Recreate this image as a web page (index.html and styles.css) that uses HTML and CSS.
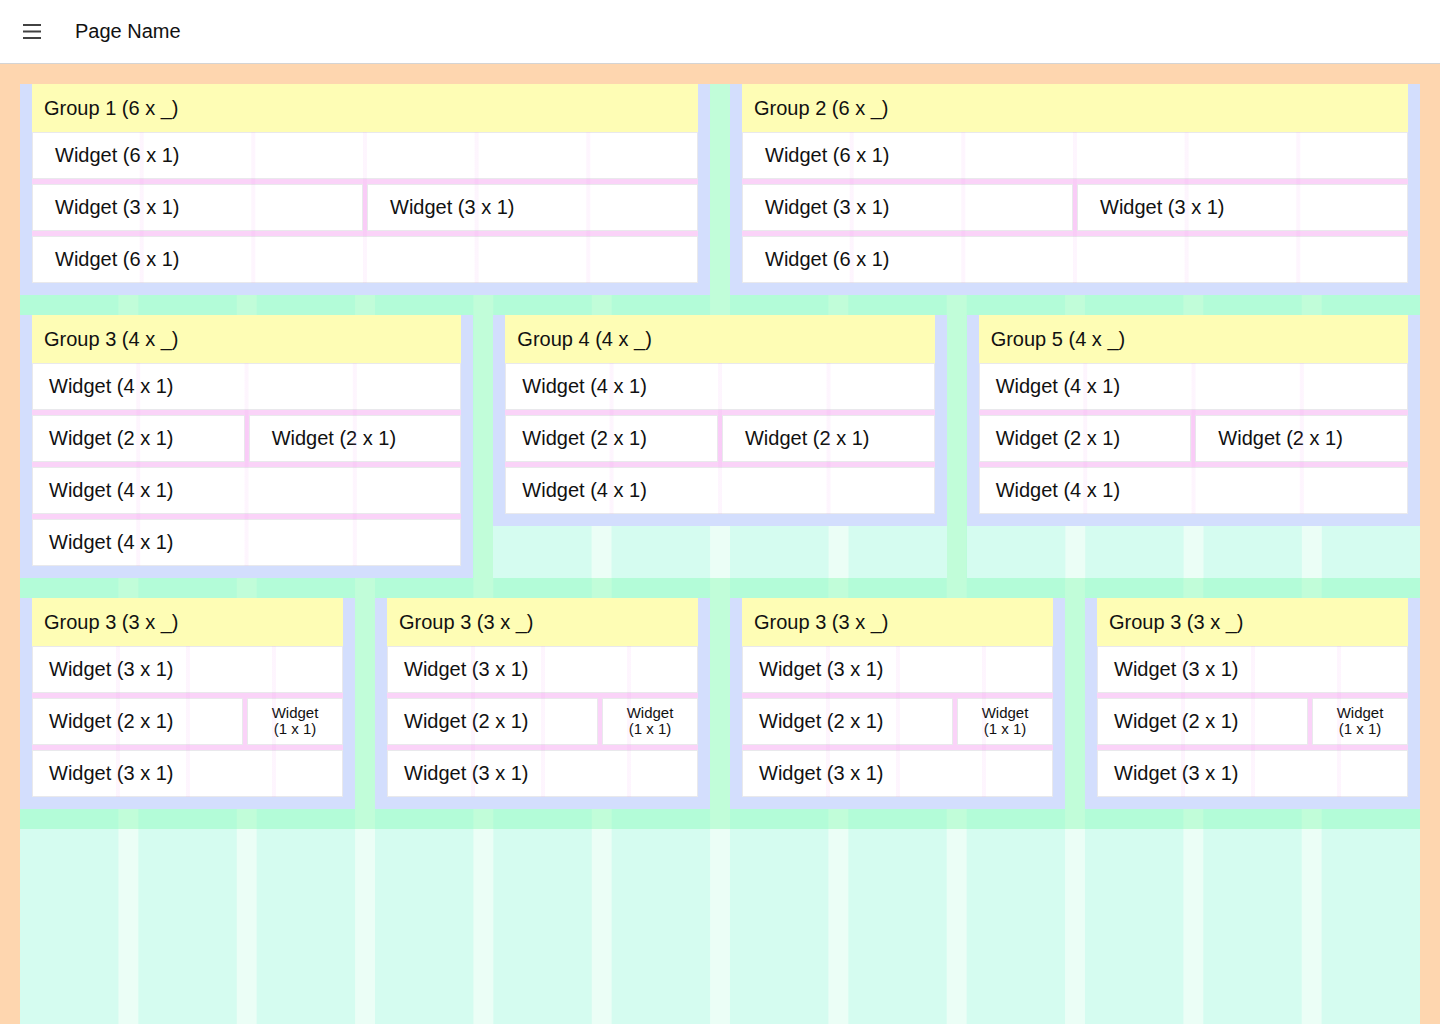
FILE: index.html
```html
<!DOCTYPE html>
<html lang="en">
<head>
<meta charset="utf-8">
<title>Page Name</title>
<link rel="stylesheet" href="styles.css">
</head>
<body>
<header class="topbar">
  <button class="menu-btn" aria-label="Menu">
    <svg width="18" height="16" viewBox="0 0 18 16" aria-hidden="true"><path d="M0 1h18M0 7.5h18M0 14h18" stroke="#424242" stroke-width="1.8" fill="none"/></svg>
  </button>
  <h1 class="page-title">Page Name</h1>
</header>
<main class="page">
  <div class="canvas">
    <div class="row">
      <div class="cell span-6">
        <section class="group">
          <div class="group-head">Group 1 (6 x _)</div>
          <div class="group-body cols-6">
            <div class="widget w6">Widget (6 x 1)</div>
            <div class="widget w3">Widget (3 x 1)</div>
            <div class="widget w3">Widget (3 x 1)</div>
            <div class="widget w6">Widget (6 x 1)</div>
          </div>
        </section>
      </div>
      <div class="cell span-6">
        <section class="group">
          <div class="group-head">Group 2 (6 x _)</div>
          <div class="group-body cols-6">
            <div class="widget w6">Widget (6 x 1)</div>
            <div class="widget w3">Widget (3 x 1)</div>
            <div class="widget w3">Widget (3 x 1)</div>
            <div class="widget w6">Widget (6 x 1)</div>
          </div>
        </section>
      </div>
    </div>
    <div class="row">
      <div class="cell span-4">
        <section class="group">
          <div class="group-head">Group 3 (4 x _)</div>
          <div class="group-body cols-4">
            <div class="widget w4 tight">Widget (4 x 1)</div>
            <div class="widget w2 tight">Widget (2 x 1)</div>
            <div class="widget w2">Widget (2 x 1)</div>
            <div class="widget w4 tight">Widget (4 x 1)</div>
            <div class="widget w4 tight">Widget (4 x 1)</div>
          </div>
        </section>
      </div>
      <div class="cell span-4">
        <section class="group">
          <div class="group-head">Group 4 (4 x _)</div>
          <div class="group-body cols-4">
            <div class="widget w4 tight">Widget (4 x 1)</div>
            <div class="widget w2 tight">Widget (2 x 1)</div>
            <div class="widget w2">Widget (2 x 1)</div>
            <div class="widget w4 tight">Widget (4 x 1)</div>
          </div>
        </section>
      </div>
      <div class="cell span-4">
        <section class="group">
          <div class="group-head">Group 5 (4 x _)</div>
          <div class="group-body cols-4">
            <div class="widget w4 tight">Widget (4 x 1)</div>
            <div class="widget w2 tight">Widget (2 x 1)</div>
            <div class="widget w2">Widget (2 x 1)</div>
            <div class="widget w4 tight">Widget (4 x 1)</div>
          </div>
        </section>
      </div>
    </div>
    <div class="row">
      <div class="cell span-3">
        <section class="group">
          <div class="group-head">Group 3 (3 x _)</div>
          <div class="group-body cols-3">
            <div class="widget wfull tight">Widget (3 x 1)</div>
            <div class="widget tight">Widget (2 x 1)</div>
            <div class="widget small">Widget<br>(1 x 1)</div>
            <div class="widget wfull tight">Widget (3 x 1)</div>
          </div>
        </section>
      </div>
      <div class="cell span-3">
        <section class="group">
          <div class="group-head">Group 3 (3 x _)</div>
          <div class="group-body cols-3">
            <div class="widget wfull tight">Widget (3 x 1)</div>
            <div class="widget tight">Widget (2 x 1)</div>
            <div class="widget small">Widget<br>(1 x 1)</div>
            <div class="widget wfull tight">Widget (3 x 1)</div>
          </div>
        </section>
      </div>
      <div class="cell span-3">
        <section class="group">
          <div class="group-head">Group 3 (3 x _)</div>
          <div class="group-body cols-3">
            <div class="widget wfull tight">Widget (3 x 1)</div>
            <div class="widget tight">Widget (2 x 1)</div>
            <div class="widget small">Widget<br>(1 x 1)</div>
            <div class="widget wfull tight">Widget (3 x 1)</div>
          </div>
        </section>
      </div>
      <div class="cell span-3">
        <section class="group">
          <div class="group-head">Group 3 (3 x _)</div>
          <div class="group-body cols-3">
            <div class="widget wfull tight">Widget (3 x 1)</div>
            <div class="widget tight">Widget (2 x 1)</div>
            <div class="widget small">Widget<br>(1 x 1)</div>
            <div class="widget wfull tight">Widget (3 x 1)</div>
          </div>
        </section>
      </div>
    </div>
    <div class="filler"></div>
  </div>
</main>
</body>
</html>
```
FILE: styles.css
```css
* { box-sizing: border-box; }

html, body {
  margin: 0;
  padding: 0;
}

body {
  font-family: "Liberation Sans", Arial, Helvetica, sans-serif;
  color: #111;
  background: #fff;
}

/* ---------- top bar ---------- */
.topbar {
  height: 64px;
  display: flex;
  align-items: center;
  padding-left: 23px;
  background: #fff;
  border-bottom: 1px solid #d4d4d4;
}

.menu-btn {
  width: 18px;
  height: 16px;
  padding: 0;
  margin: 0 34px 0 0;
  border: 0;
  background: none;
  display: flex;
  cursor: pointer;
}

.page-title {
  margin: 0;
  font-size: 20px;
  font-weight: 400;
  color: #111;
}

/* ---------- page canvas ---------- */
.page {
  background: #fed6af;
  padding: 20px 20px 0;
}

.canvas {
  min-height: calc(100vh - 84px);
  display: flex;
  flex-direction: column;
  gap: 20px;
  background-color: #b3fcd8;
  background-image: linear-gradient(to right, transparent calc(100% - 20px), #c1fdd9 calc(100% - 20px));
  background-size: calc((100% + 20px) / 12) 100%;
}

.row {
  display: grid;
  grid-template-columns: repeat(12, minmax(0, 1fr));
  column-gap: 20px;
}

.cell,
.filler {
  background-color: #d5fcf0;
  background-image: linear-gradient(to right, transparent calc(100% - 20px), #ebfef6 calc(100% - 20px));
  background-size: calc((100% + 20px) / var(--n)) 100%;
  display: flex;
  flex-direction: column;
}

.filler { --n: 12; flex: 1; }

.span-6 { grid-column: span 6; --n: 6; }
.span-4 { grid-column: span 4; --n: 4; }
.span-3 { grid-column: span 3; --n: 3; }

/* ---------- groups ---------- */
.group {
  background: #d3defd;
  padding: 0 12px 12px;
}

.group-head {
  height: 48px;
  display: flex;
  align-items: center;
  padding-left: 12px;
  background: #fefdb5;
  font-size: 20px;
}

.group-body {
  position: relative;
  display: grid;
  grid-auto-rows: 47px;
  row-gap: 5px;
  column-gap: 4px;
  background: #fad3f8;
}

.group-body::after {
  content: "";
  position: absolute;
  inset: 0;
  pointer-events: none;
}

.cols-6 { grid-template-columns: repeat(6, minmax(0, 1fr)); }
.cols-4 { grid-template-columns: repeat(4, minmax(0, 1fr)); }
.cols-3 { grid-template-columns: 211fr 96fr; }

.cols-6::after,
.cols-4::after {
  background-image: linear-gradient(to right, transparent calc(100% - 4px), rgba(236, 110, 236, 0.065) calc(100% - 4px));
}
.cols-6::after { background-size: calc((100% + 4px) / 6) 100%; }
.cols-4::after { background-size: calc((100% + 4px) / 4) 100%; }

.cols-3::after {
  background-image: linear-gradient(to right,
    transparent 27%, rgba(236, 110, 236, 0.065) 27%, rgba(236, 110, 236, 0.065) 28.3%, transparent 28.3%,
    transparent 49.4%, rgba(236, 110, 236, 0.065) 49.4%, rgba(236, 110, 236, 0.065) 50.9%, transparent 50.9%,
    transparent 77.2%, rgba(236, 110, 236, 0.065) 77.2%, rgba(236, 110, 236, 0.065) 78.5%, transparent 78.5%);
}

/* ---------- widgets ---------- */
.widget {
  display: flex;
  align-items: center;
  padding-left: 22px;
  background: #fff;
  border: 1px solid #e9e9ec;
  font-size: 20px;
  white-space: nowrap;
  overflow: hidden;
}

.widget.tight { padding-left: 16px; }

.w6 { grid-column: span 6; }
.w4 { grid-column: span 4; }
.w3 { grid-column: span 3; }
.w2 { grid-column: span 2; }
.wfull { grid-column: 1 / -1; }

.widget.small {
  justify-content: center;
  padding: 0 0 2px;
  text-align: center;
  font-size: 15px;
  line-height: 16px;
}
```
